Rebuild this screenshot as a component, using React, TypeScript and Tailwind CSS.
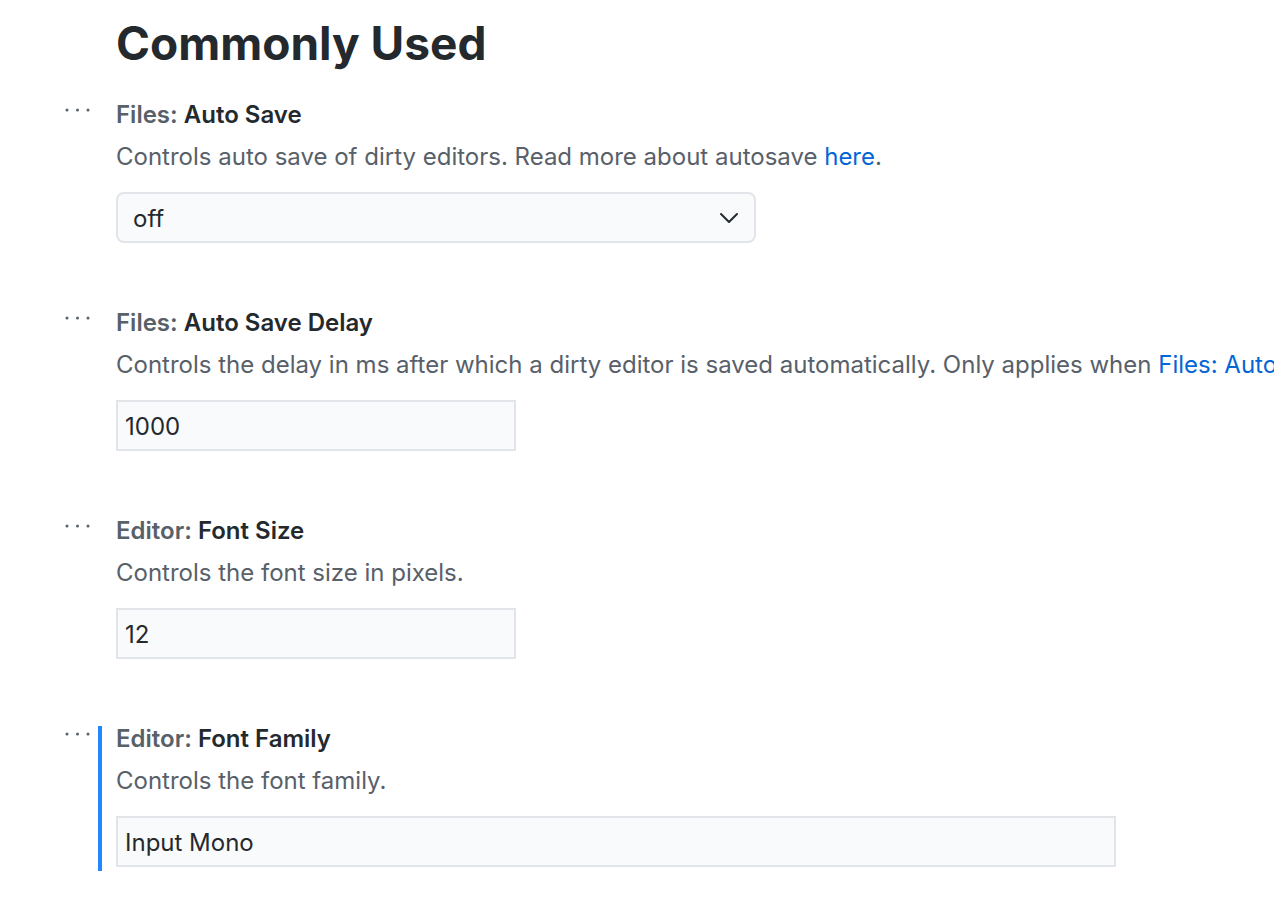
import React from 'react';

interface SettingItem {
    category: string;
    name: string;
    description: React.ReactNode;
    control: 'select' | 'input';
    value: string;
    width: string;
    focused?: boolean;
}

const Dots: React.FC = () => (
    <svg width="26" height="4" viewBox="0 0 26 4" className="mt-[6px]">
        <circle cx="2" cy="2" r="1.5" fill="#586069" />
        <circle cx="12.5" cy="2" r="1.5" fill="#586069" />
        <circle cx="23" cy="2" r="1.5" fill="#586069" />
    </svg>
);

const items: SettingItem[] = [
    {
        category: 'Files:',
        name: 'Auto Save',
        description: (
            <>
                Controls auto save of dirty editors. Read more about autosave{' '}
                <span className="text-[#0366d6]">here</span>.
            </>
        ),
        control: 'select',
        value: 'off',
        width: 'w-[640px]',
    },
    {
        category: 'Files:',
        name: 'Auto Save Delay',
        description: (
            <>
                Controls the delay in ms after which a dirty editor is saved automatically. Only applies when{' '}
                <span className="text-[#0366d6]">Files: Auto Save</span> is set to afterDelay.
            </>
        ),
        control: 'input',
        value: '1000',
        width: 'w-[400px]',
    },
    {
        category: 'Editor:',
        name: 'Font Size',
        description: 'Controls the font size in pixels.',
        control: 'input',
        value: '12',
        width: 'w-[400px]',
    },
    {
        category: 'Editor:',
        name: 'Font Family',
        description: 'Controls the font family.',
        control: 'input',
        value: 'Input Mono',
        width: 'w-[1000px]',
        focused: true,
    },
];

const Setting: React.FC<{ item: SettingItem }> = ({ item }) => (
    <div className="flex">
        <div className="w-[98px] shrink-0 flex justify-end pr-[7px]">
            <Dots />
        </div>
        <div
            className={`min-w-0 flex-1 border-l-4 pl-[14px] pb-[4px] ${item.focused ? 'border-[#2188ff]' : 'border-transparent'}`}
        >
            <div className="text-[24px] leading-[26px] font-semibold">
                <span className="text-[#586069]">{item.category}</span>{' '}
                <span className="text-[#24292e]">{item.name}</span>
            </div>
            <div className="mt-[16px] text-[24px] leading-[26px] text-[#586069]">{item.description}</div>
            {item.control === 'select' ? (
                <div
                    className={`mt-[22px] ${item.width} h-[51px] rounded-[8px] border-2 border-[#e1e4e8] bg-[#f9fafb] flex items-center justify-between pl-[15px] pr-[15px]`}
                >
                    <span className="pt-[2px] text-[24px] text-[#24292e]">{item.value}</span>
                    <svg width="20" height="12" viewBox="0 0 20 12" fill="none">
                        <path d="M2 2l8 8 8-8" stroke="#24292e" strokeWidth="2" strokeLinecap="round" strokeLinejoin="round" />
                    </svg>
                </div>
            ) : (
                <div
                    className={`mt-[22px] ${item.width} h-[51px] border-2 border-[#e1e4e8] bg-[#f9fafb] flex items-center pl-[7px]`}
                >
                    <span className="pt-[3px] text-[24px] text-[#24292e]">{item.value}</span>
                </div>
            )}
        </div>
    </div>
);

const App: React.FC = () => {
    return (
        <div
            className="w-full h-[914px] overflow-hidden bg-white whitespace-nowrap"
            style={{ fontFamily: 'Inter, "Noto Sans", sans-serif' }}
        >
            <h1 className="pt-[19px] pl-[116px] text-[46px] leading-[48px] font-bold text-[#24292e]">Commonly Used</h1>
            <div className="mt-[35px] flex flex-col gap-[63px]">
                {items.map((item, index) => (
                    <Setting key={index} item={item} />
                ))}
            </div>
        </div>
    );
};

export default App;
